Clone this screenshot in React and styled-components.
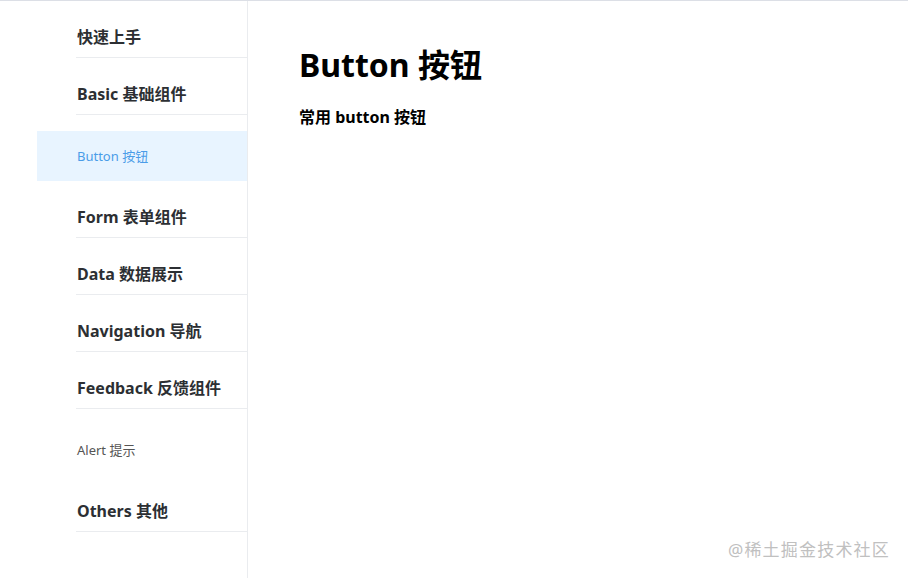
import React from "react";
import styled, { createGlobalStyle } from "styled-components";

const GlobalStyle = createGlobalStyle`
  html, body {
    margin: 0;
    padding: 0;
    background: #fff;
  }
  body {
    font-family: "Noto Sans", "Noto Sans CJK SC", sans-serif;
    color: #2c3e50;
  }
`;

const Page = styled.div`
  position: relative;
  display: flex;
  flex-direction: row;
  min-height: 577px;
  border-top: 1px solid #dcdfe6;
`;

const Sidebar = styled.nav`
  margin-left: 37px;
  width: 210px;
  border-right: 1px solid #eaecef;
  display: flex;
  flex-direction: column;
`;

const GroupTitle = styled.div`
  margin-left: 39px;
  padding: 16px 0 0 1px;
  height: 40px;
  line-height: 40px;
  font-size: 16px;
  font-weight: 700;
  color: #2c2f33;
  border-bottom: 1px solid #eaecef;
`;

const ItemList = styled.div`
  padding-top: 16px;
  display: flex;
  flex-direction: column;
`;

const Item = styled.div`
  height: 50px;
  line-height: 50px;
  padding-left: 40px;
  font-size: 13px;
  color: ${(p) => (p.$active ? "#4a9ce8" : "#555")};
  background: ${(p) => (p.$active ? "#e8f4ff" : "transparent")};
`;

const Main = styled.main`
  flex: 1;
  padding: 42px 0 0 51px;
`;

const Title = styled.h1`
  margin: 0;
  font-size: 32px;
  font-weight: 700;
  line-height: 44px;
  color: #000;
`;

const Desc = styled.p`
  margin: 17px 0 0;
  font-size: 16px;
  font-weight: 700;
  color: #000;
`;

const Watermark = styled.div`
  position: absolute;
  right: 18px;
  bottom: 17px;
  font-size: 17px;
  color: #c0c0c0;
  letter-spacing: 1.2px;
`;

const menu = [
  { title: "快速上手", items: [] },
  { title: "Basic 基础组件", items: ["Button 按钮"] },
  { title: "Form 表单组件", items: [] },
  { title: "Data 数据展示", items: [] },
  { title: "Navigation 导航", items: [] },
  { title: "Feedback 反馈组件", items: ["Alert 提示"] },
  { title: "Others 其他", items: [] },
];

export default function App() {
  const active = "Button 按钮";
  return (
    <>
      <GlobalStyle />
      <Page>
        <Sidebar>
          {menu.map((group) => (
            <React.Fragment key={group.title}>
              <GroupTitle>{group.title}</GroupTitle>
              {group.items.length > 0 && (
                <ItemList>
                  {group.items.map((item) => (
                    <Item key={item} $active={item === active}>
                      {item}
                    </Item>
                  ))}
                </ItemList>
              )}
            </React.Fragment>
          ))}
        </Sidebar>
        <Main>
          <Title>Button 按钮</Title>
          <Desc>常用 button 按钮</Desc>
        </Main>
        <Watermark>@稀土掘金技术社区</Watermark>
      </Page>
    </>
  );
}
